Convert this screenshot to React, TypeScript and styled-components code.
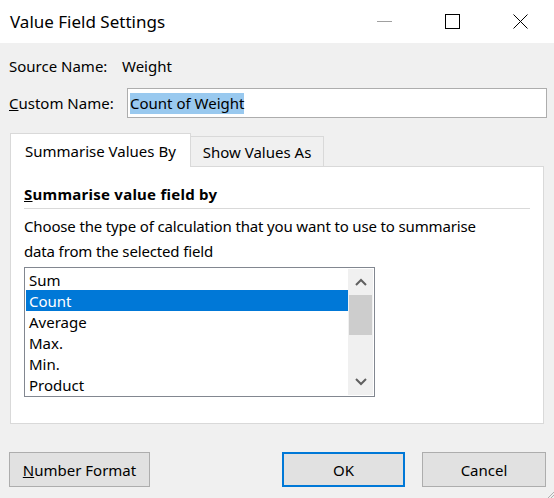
import React from "react";
import styled, { createGlobalStyle } from "styled-components";

const GlobalStyle = createGlobalStyle`
  html, body {
    margin: 0;
    padding: 0;
  }
  body {
    background: #f0f0f0;
    font-family: "Noto Sans", "Open Sans", sans-serif;
    font-size: 15px;
    color: #000;
  }
`;

const Window = styled.div`
  position: relative;
  width: 554px;
  height: 498px;
  display: flex;
  flex-direction: column;
  background: #f0f0f0;
  overflow: hidden;
`;

const TitleBar = styled.div`
  height: 43px;
  flex-shrink: 0;
  display: flex;
  align-items: center;
  background: #fff;
`;

const Title = styled.div`
  flex: 1;
  padding-left: 10px;
  font-size: 17px;
`;

const CaptionButton = styled.div`
  width: 68px;
  height: 43px;
  display: flex;
  align-items: center;
  justify-content: center;
`;

const Content = styled.div`
  flex: 1;
  display: flex;
  flex-direction: column;
  padding: 12px 10px 0 9px;
`;

const FieldRow = styled.div<{ $gap: number }>`
  display: flex;
  align-items: center;
  margin-top: ${(p) => p.$gap}px;
`;

const Label = styled.div<{ $width: number }>`
  width: ${(p) => p.$width}px;
  flex-shrink: 0;
  line-height: 22px;
`;

const Value = styled.div`
  line-height: 22px;
`;

const NameInput = styled.div`
  flex: 1;
  height: 30px;
  box-sizing: border-box;
  margin-right: -3px;
  border: 1px solid #adadad;
  background: #fff;
  display: flex;
  align-items: center;
  padding-left: 2px;
`;

const Selection = styled.span`
  background: #99c9ef;
  line-height: 21px;
`;

const TabStrip = styled.div`
  display: flex;
  align-items: flex-end;
  margin-top: 15px;
  margin-left: 1px;
  position: relative;
  z-index: 1;
  margin-bottom: -1px;
`;

const Tab = styled.div<{ $active?: boolean }>`
  box-sizing: border-box;
  height: ${(p) => (p.$active ? 34 : 31)}px;
  padding: 0 ${(p) => (p.$active ? 14 : 12)}px;
  padding-top: ${(p) => (p.$active ? 1 : 0)}px;
  display: flex;
  align-items: center;
  border: 1px solid #d9d9d9;
  border-bottom: ${(p) => (p.$active ? "none" : "1px solid #d9d9d9")};
  border-left: ${(p) => (p.$active ? "1px solid #d9d9d9" : "none")};
  background: ${(p) => (p.$active ? "#fff" : "#f0f0f0")};
`;

const Panel = styled.div`
  height: 258px;
  box-sizing: border-box;
  margin-left: 1px;
  border: 1px solid #d9d9d9;
  background: #fff;
  padding: 17px 13px 0 13px;
  display: flex;
  flex-direction: column;
`;

const Heading = styled.div`
  font-weight: 700;
  line-height: 20px;
  letter-spacing: 0.25px;
  padding-bottom: 4px;
  border-bottom: 1px solid #d9d9d9;
`;

const Description = styled.div`
  margin-top: 5px;
  line-height: 25px;
  letter-spacing: -0.15px;
  width: 470px;
`;

const ListBox = styled.div`
  margin-top: 3px;
  width: 351px;
  box-sizing: border-box;
  border: 1px solid #828790;
  padding: 0 1px;
  display: flex;
`;

const Items = styled.div`
  width: 322px;
  padding: 1px 0;
`;

const Item = styled.div<{ $selected?: boolean }>`
  height: 21px;
  line-height: 23px;
  overflow: hidden;
  padding-left: 3px;
  background: ${(p) => (p.$selected ? "#0078d7" : "transparent")};
  color: ${(p) => (p.$selected ? "#fff" : "#000")};
`;

const ScrollBar = styled.div`
  width: 25px;
  margin: 1px 0;
  background: #f0f0f0;
  display: flex;
  flex-direction: column;
`;

const ScrollArrow = styled.div`
  height: 26px;
  display: flex;
  align-items: center;
  justify-content: center;
`;

const Thumb = styled.div`
  height: 40px;
  margin: 0 1px;
  background: #cdcdcd;
`;

const ScrollTrack = styled.div`
  flex: 1;
`;

const ButtonRow = styled.div`
  display: flex;
  margin-top: 28px;
  margin-right: -2px;
`;

const Button = styled.div<{ $width: number; $default?: boolean }>`
  width: ${(p) => p.$width}px;
  height: 35px;
  box-sizing: border-box;
  background: #e1e1e1;
  border: ${(p) => (p.$default ? "2px solid #0078d7" : "1px solid #adadad")};
  display: flex;
  align-items: center;
  justify-content: center;
`;

const Spacer = styled.div<{ $width?: number }>`
  flex: ${(p) => (p.$width ? "none" : 1)};
  width: ${(p) => (p.$width ? `${p.$width}px` : "auto")};
`;

const Grip = styled.svg`
  position: absolute;
  right: 0;
  bottom: 0;
`;

const items = ["Sum", "Count", "Average", "Max.", "Min.", "Product"];

export default function App() {
  return (
    <Window>
      <GlobalStyle />
      <TitleBar>
        <Title>Value Field Settings</Title>
        <CaptionButton>
          <svg width="15" height="15" viewBox="0 0 15 15">
            <line x1="0" y1="7.5" x2="15" y2="7.5" stroke="#a0a0a0" strokeWidth="1" />
          </svg>
        </CaptionButton>
        <CaptionButton>
          <svg width="15" height="15" viewBox="0 0 15 15">
            <rect x="0.5" y="0.5" width="14" height="14" fill="none" stroke="#000" strokeWidth="1" />
          </svg>
        </CaptionButton>
        <CaptionButton>
          <svg width="15" height="15" viewBox="0 0 15 15">
            <path d="M0.5 0.5 L14.5 14.5 M14.5 0.5 L0.5 14.5" stroke="#000" strokeWidth="1" />
          </svg>
        </CaptionButton>
      </TitleBar>

      <Content>
        <FieldRow $gap={0}>
          <Label $width={113}>Source Name:</Label>
          <Value>Weight</Value>
        </FieldRow>
        <FieldRow $gap={11}>
          <Label $width={118}>
            <u>C</u>ustom Name:
          </Label>
          <NameInput>
            <Selection>Count of Weight</Selection>
          </NameInput>
        </FieldRow>

        <TabStrip>
          <Tab $active>Summarise Values By</Tab>
          <Tab>Show Values As</Tab>
        </TabStrip>
        <Panel>
          <Heading>
            <u>S</u>ummarise value field by
          </Heading>
          <Description>
            Choose the type of calculation that you want to use to summarise
            data from the selected field
          </Description>
          <ListBox>
            <Items>
              {items.map((it) => (
                <Item key={it} $selected={it === "Count"}>
                  {it}
                </Item>
              ))}
            </Items>
            <ScrollBar>
              <ScrollArrow>
                <svg width="12" height="8" viewBox="0 0 12 8">
                  <path d="M1 7 L6 2 L11 7" fill="none" stroke="#606060" strokeWidth="2" />
                </svg>
              </ScrollArrow>
              <Thumb />
              <ScrollTrack />
              <ScrollArrow>
                <svg width="12" height="8" viewBox="0 0 12 8">
                  <path d="M1 1 L6 6 L11 1" fill="none" stroke="#606060" strokeWidth="2" />
                </svg>
              </ScrollArrow>
            </ScrollBar>
          </ListBox>
        </Panel>

        <ButtonRow>
          <Button $width={141}>
            <span>
              <u>N</u>umber Format
            </span>
          </Button>
          <Spacer />
          <Button $width={123} $default>
            OK
          </Button>
          <Spacer $width={17} />
          <Button $width={124}>Cancel</Button>
        </ButtonRow>
      </Content>
      <Grip width="8" height="8" viewBox="0 0 8 8">
        <path d="M8 2 L2 8 M8 5 L5 8" stroke="#b0b0b0" strokeWidth="1" />
      </Grip>
    </Window>
  );
}
